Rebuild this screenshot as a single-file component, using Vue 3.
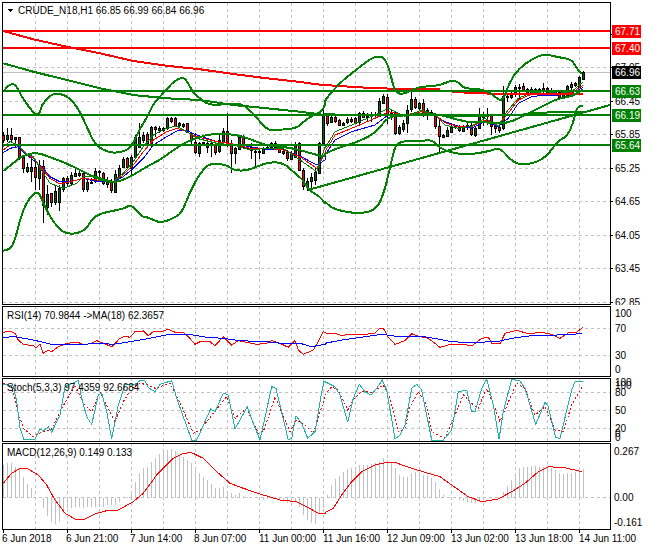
<script setup>
// all series are read off at 3x, so coords get divided by 3 below
const leftPair = (list, oy = 0) => pairs(list, 0, oy);
const rightPair = (list, oy = 0) => pairs(list, 325, oy);

function pairs(list, ox, oy) {
  const out = [];
  for (let i = 0; i < list.length; i += 2) {
    out.push([ox + list[i] / 3, oy + list[i + 1] / 3]);
  }
  return out;
}

function poly(points) {
  return points.map((p) => p[0].toFixed(1) + "," + p[1].toFixed(1)).join(" ");
}

// midpoint smoothing for the fat bollinger curves
function smooth(points) {
  let d = "M" + points[0][0].toFixed(1) + " " + points[0][1].toFixed(1);
  for (let i = 1; i < points.length - 1; i++) {
    const mx = (points[i][0] + points[i + 1][0]) / 2;
    const my = (points[i][1] + points[i + 1][1]) / 2;
    d += " Q" + points[i][0].toFixed(1) + " " + points[i][1].toFixed(1) + " " + mx.toFixed(1) + " " + my.toFixed(1);
  }
  const last = points[points.length - 1];
  return d + " L" + last[0].toFixed(1) + " " + last[1].toFixed(1);
}

const gridX = [35, 67, 99, 131, 163, 195, 227, 259, 291, 323, 355, 387, 419, 451, 483, 515, 547, 579];

const candleRaw = [
  [405,420,395,428,1],[405,418,385,425,0],[405,418,385,425,1],[412,416,410,440,0],[412,470,410,480,1],[470,503,465,518,1],
  [500,512,490,518,0],[500,512,470,545,0],[500,530,480,570,1],[498,535,480,570,0],[498,615,480,668,1],[582,620,555,645,0],
  [580,605,578,620,1],[572,605,555,615,0],[565,605,555,632,0],[535,568,530,575,0],[533,550,528,558,1],[525,548,515,555,0],
  [520,528,508,532,0],[520,524,508,530,0],[518,568,515,575,1],[545,568,540,575,0],[545,548,535,552,0],[512,542,505,550,0],
  [512,516,510,542,1],[518,550,515,555,1],[540,552,532,565,0],[542,570,538,578,1],[522,575,510,578,0],[503,530,495,530,0],
  [477,500,470,505,0],[475,500,470,500,1],[472,505,465,530,0],[412,470,405,475,0],[410,440,368,445,0],[405,420,395,430,0],
  [402,430,395,432,1],[380,430,378,440,0],[381,388,378,410,1],[385,389,378,400,0],[385,390,380,395,1],[355,385,350,390,0],
  [355,362,350,368,1],[353,378,350,382,1],[370,375,365,382,0],[373,378,368,384,0],[370,395,368,400,1],[398,420,395,432,1],
  [425,455,400,462,1],[428,458,425,472,0],[427,430,425,432,1],[430,440,420,458,0],[430,432,425,470,1],[432,455,430,465,1],
  [420,452,405,458,0],[393,425,385,430,0],[393,430,340,440,1],[428,458,420,520,1],[445,460,440,492,0],[410,447,405,450,0],
  [412,440,405,445,1],[435,445,432,448,1],[440,450,430,478,1],[453,456,450,498,0],[453,456,450,478,0],[445,458,440,460,0],
  [440,445,436,450,1],[430,440,425,443,0],[428,440,422,445,0],[437,455,435,460,1],[452,458,440,465,1],[455,473,450,482,1],
  [460,476,452,480,0],[432,470,425,472,0],[430,510,425,512,1],[510,558,505,570,1],[542,558,535,572,0],[530,542,520,565,0],
  [517,540,505,555,0],[430,520,425,522,0],[345,430,315,435,0],
  [345,368,340,378,1],[350,365,338,370,0],[350,362,345,370,1],[360,376,358,378,1],[370,374,365,378,0],[358,365,350,372,0],
  [357,362,352,368,0],[355,368,350,372,1],[340,365,335,378,0],[340,350,332,352,1],[347,352,340,365,0],[345,348,335,365,0],
  [342,346,335,350,0],[303,348,295,352,0],[288,308,282,312,0],[292,345,282,372,1],[338,345,330,360,0],[338,400,335,405,1],
  [380,398,375,405,0],[368,388,360,395,0],[330,370,315,398,0],[298,328,265,335,0],[297,322,290,328,1],[310,325,305,330,0],
  [308,335,298,350,1],[330,345,325,360,0],[337,345,330,348,1],[347,378,340,388,1],[378,408,360,460,1],[405,410,402,412,0],
  [390,408,380,410,0],[380,395,370,398,0],[378,382,375,388,0],[380,390,375,395,1],[380,392,376,395,0],[375,382,365,390,0],
  [375,403,365,408,1],[385,405,380,410,0],[345,385,325,388,0],[345,350,335,378,1],[345,348,325,375,0],[345,378,342,405,1],
  [378,385,370,398,1],[382,390,378,398,1],[288,385,258,390,0],[288,292,280,305,1],[285,290,275,298,0],[260,282,255,290,0],
  [260,264,252,300,0],[258,270,248,275,1],[268,278,265,285,1],[268,280,262,285,0],[268,272,265,278,0],[268,270,265,280,0],
  [263,272,250,280,0],[265,275,262,282,1],[270,278,265,282,0],[275,278,272,282,0],[275,290,272,295,1],[280,290,272,295,0],
  [258,290,255,295,0],[252,262,245,290,0],[250,256,245,262,1],[232,262,228,265,0],[216,238,212,240,0]
];

const candles = candleRaw.map((c, i) => ({
  x: 3 + 4 * i,
  top: Math.round(c[0] / 3),
  bottom: Math.round(c[1] / 3),
  wickTop: Math.round(c[2] / 3),
  wickBottom: Math.round(c[3] / 3),
  fill: c[4] ? "#ff0000" : "#006400"
}));

const bandUpper = smooth([
  ...leftPair([10,275,25,255,45,250,65,290,90,325,105,343,118,343,125,315,150,285,175,280,205,290,235,325,260,380,285,433,310,450,340,460,380,452,400,430,420,385,440,355,460,310,490,280,520,245,545,232,560,240,580,280,600,295,625,315,680,313,725,310,760,340,800,390,830,390,890,385,910,365,940,345,965,335,975,315]),
  ...rightPair([0,300,30,265,60,235,100,205,130,180,160,167,180,175,195,215,210,280,240,282,280,260,340,258,380,240,405,248,415,265,470,268,500,280,530,308,545,270,565,225,600,190,640,168,665,163,700,172,740,178,755,205,770,222])
]);
const bandLower = smooth([
  ...leftPair([10,752,30,750,45,720,65,640,90,590,115,572,130,610,150,650,175,685,200,702,235,700,260,685,285,645,340,632,375,625,393,613,425,650,445,652,480,670,520,655,545,640,570,575,600,520,630,488,680,495,700,510,740,513,800,487,850,487,890,525,910,540,925,570,960,590,975,610]),
  ...rightPair([0,605,25,628,100,642,155,630,180,570,200,480,215,422,280,425,320,418,345,445,380,458,430,465,500,452,525,442,570,495,630,490,670,465,695,425,725,410,745,370,755,320,775,318])
]);
const bandMiddle = smooth([
  ...leftPair([10,513,40,490,60,472,85,462,115,458,150,472,200,490,250,515,300,540,340,548,370,540,400,525,440,500,480,480,520,450,560,425,620,403,680,400,740,412,800,438,850,440,900,450,950,465,975,470]),
  ...rightPair([0,460,50,440,100,425,150,400,190,350,220,348,300,340,350,345,400,360,440,368,470,365,520,372,560,365,600,345,650,320,700,295,740,290,775,268])
]);

const slowGreen = poly([
  ...leftPair([10,190,100,215,200,240,300,265,400,285,500,295,600,300,700,315,800,325,900,335,975,345]),
  ...rightPair([0,343,100,345,350,345,400,348,580,345,640,338,775,335])
]);
const slowRedA = poly([
  ...leftPair([10,93,100,118,200,140,300,160,400,183,500,197,600,208,700,222,800,235,900,246,975,256]),
  ...rightPair([0,255,100,262,200,266,345,268])
]);
const slowRedB = poly(rightPair([380,276,500,281,600,283,775,283]));

const maBlue = poly([
  ...leftPair([10,458,30,445,55,440,75,460,100,480,130,505,150,530,180,545,210,545,250,535,290,545,340,545,370,530,400,505,430,475,460,435,500,410,530,393,560,392,590,405,650,425,700,432,750,440,800,448,850,450,900,468,950,495,975,480]),
  ...rightPair([0,465,30,420,80,395,150,375,190,345,230,345,270,345,320,340,360,365,400,378,440,385,480,365,520,380,550,355,580,310,620,290,660,285,700,285,740,280,775,262])
]);
const maRed = poly([
  ...leftPair([10,450,30,435,55,435,75,458,100,475,130,510,150,535,180,552,210,545,250,535,290,540,340,545,370,525,400,495,430,455,460,420,500,395,530,385,560,395,590,410,650,425,700,432,750,445,800,445,850,450,900,470,950,505,975,460]),
  ...rightPair([0,455,30,405,80,385,150,355,190,335,240,345,290,335,330,345,360,368,400,380,440,380,480,360,520,378,545,345,580,300,620,282,660,280,700,282,740,278,775,255])
]);
const maGreen = poly([
  ...leftPair([10,440,30,425,55,435,75,460,100,470,130,520,150,550,190,565,230,550,250,530,290,530,340,545,370,520,400,485,430,440,460,405,500,385,530,378,560,395,590,415,650,430,700,435,750,450,800,445,850,445,900,480,950,515,975,440]),
  ...rightPair([0,445,30,395,80,375,150,345,190,325,240,350,290,330,330,345,360,375,400,385,440,378,480,355,520,378,545,335,580,295,620,278,660,275,700,280,740,275,775,245])
]);

const priceLabels = [
  { text: "67.65", y: 34 }, { text: "67.05", y: 67 }, { text: "66.45", y: 101 }, { text: "65.85", y: 134 },
  { text: "65.25", y: 168 }, { text: "64.65", y: 201 }, { text: "64.05", y: 235 }, { text: "63.45", y: 268 }, { text: "62.85", y: 302 }
];
const priceFlags = [
  { text: "67.71", y: 31, bg: "#ff0000" }, { text: "67.40", y: 48, bg: "#ff0000" }, { text: "66.96", y: 72, bg: "#000000" },
  { text: "66.63", y: 91, bg: "#008000" }, { text: "66.19", y: 115, bg: "#008000" }, { text: "65.64", y: 145, bg: "#008000" }
];

const rsiLine = poly([
  ...leftPair([10,172,30,168,45,175,55,195,70,208,100,212,108,218,120,208,130,235,145,225,155,230,175,215,200,205,235,202,250,210,275,205,290,197,310,205,335,215,360,190,375,184,390,187,405,170,430,168,445,182,460,170,490,168,505,162,525,172,550,173,565,185,585,208,600,200,630,200,645,212,670,185,695,210,715,197,740,202,770,208,800,205,815,197,840,205,865,217,885,197,895,225,910,238,940,225,955,200,970,170], 275),
  ...rightPair([0,172,10,177,30,175,50,182,70,178,100,178,130,177,150,175,165,160,175,160,190,187,210,208,240,197,260,176,280,184,310,190,345,217,380,207,410,207,440,213,470,190,490,187,500,205,525,207,540,175,575,166,610,176,650,172,680,178,705,190,730,174,755,172,775,156], 275)
]);
const rsiAvg = poly([
  ...leftPair([10,187,45,185,100,195,150,207,200,207,250,208,300,205,340,208,390,200,450,190,510,178,580,180,620,187,670,190,720,197,800,200,860,207,900,205,935,215,975,208], 275),
  ...rightPair([0,205,50,195,100,188,170,178,230,186,290,184,340,192,380,200,440,203,520,199,570,188,620,182,680,181,770,176], 275)
]);

const stochMain = poly([
  ...leftPair([10,328,40,333,50,380,60,460,72,495,105,492,120,462,130,468,145,455,155,472,180,420,195,335,235,316,245,370,260,425,275,448,295,360,305,355,320,410,335,492,355,390,375,330,405,328,420,317,435,318,445,338,465,350,480,328,515,317,530,370,575,495,590,495,632,402,645,410,670,354,685,360,705,462,742,395,760,445,780,495,815,335,828,340,865,495,875,490,888,422,905,445,923,490,945,470,960,380,972,318], 275),
  ...rightPair([0,320,30,335,45,360,68,442,85,370,103,328,120,350,138,360,155,340,172,315,185,345,210,492,225,480,240,450,260,340,275,328,290,345,320,495,355,495,380,465,400,350,425,345,440,410,450,410,470,340,485,313,505,390,522,492,535,410,560,313,585,318,600,340,632,448,660,382,670,395,692,488,705,490,740,345,750,320,775,320], 275)
]);
const stochSignal = poly([
  ...leftPair([10,325,35,335,50,400,70,460,100,485,125,472,155,462,185,400,200,375,225,330,250,385,275,410,300,350,325,400,345,440,370,380,395,340,420,325,445,330,465,340,510,325,545,395,580,475,600,465,640,415,680,365,705,430,740,400,775,475,790,470,825,365,870,470,890,435,915,450,940,475,975,365], 275),
  ...rightPair([0,360,20,335,40,345,68,405,85,375,110,348,140,352,175,330,195,370,220,470,240,460,255,395,280,350,305,390,320,470,340,480,360,490,390,420,415,360,440,385,460,400,485,340,510,400,525,440,555,370,575,325,600,340,630,420,660,395,690,465,715,470,740,390,775,330], 275)
]);

const macdTops = [
  570,565,565,575,580,605,628,640,665,667,698,722,742,748,740,715,700,700,695,695,700,695,695,695,695,695,690,690,690,682,670,667,
  650,620,595,578,575,562,550,538,530,525,522,528,540,545,555,565,580,595,605,615,628,640,640,635,652,655,660,655,662,665,665,665,
  668,675,672,670,670,672,675,685,680,680,695,720,735,745,748,715,700,
  660,630,612,603,590,582,580,578,570,570,570,568,565,560,548,555,565,580,600,605,605,595,592,592,600,600,610,622,642,660,667,667,
  670,675,678,680,685,685,680,670,670,670,667,665,650,632,615,595,580,575,575,573,573,575,575,572,578,585,595,598,595,593,592,590,582
];
const macdBars = macdTops.map((z, i) => ({ x: 3.5 + 4 * i, y: 275 + z / 3 }));
const macdLine = poly([
  ...leftPair([10,625,35,595,60,580,85,582,115,600,140,630,165,675,195,715,225,732,255,732,290,715,320,707,355,705,400,680,430,655,470,600,520,550,550,535,575,533,610,550,650,590,690,625,730,640,790,660,840,675,890,680,920,695,955,715,975,716], 275),
  ...rightPair([0,713,25,700,50,660,80,620,110,590,150,570,185,562,215,564,260,580,300,592,345,605,380,630,430,665,470,680,520,672,560,650,600,625,640,590,670,575,720,578,770,590], 275)
]);

const timeLabels = [
  { text: "6 Jun 2018", x: 2, tick: 3 }, { text: "6 Jun 21:00", x: 66, tick: 67 }, { text: "7 Jun 14:00", x: 130, tick: 131 },
  { text: "8 Jun 07:00", x: 194, tick: 195 }, { text: "11 Jun 00:00", x: 259, tick: 259 }, { text: "11 Jun 16:00", x: 323, tick: 323 },
  { text: "12 Jun 09:00", x: 387, tick: 387 }, { text: "13 Jun 02:00", x: 451, tick: 451 }, { text: "13 Jun 18:00", x: 515, tick: 515 },
  { text: "14 Jun 11:00", x: 579, tick: 579 }
];
</script>

<template>
  <div class="chart">
    <!-- price pane -->
    <svg class="pane" width="650" height="305" viewBox="0 0 650 305">
      <g class="grid">
        <line v-for="x in gridX" :key="x" :x1="x + 0.5" y1="3" :x2="x + 0.5" y2="304" />
        <line v-for="p in priceLabels.slice(1)" :key="p.text" x1="3" :y1="p.y + 0.5" x2="610" :y2="p.y + 0.5" />
      </g>
      <line class="last-price" x1="3" y1="72.5" x2="610" y2="72.5" />
      <g v-for="c in candles" :key="c.x">
        <line class="wick" :x1="c.x + 0.5" :y1="c.wickTop" :x2="c.x + 0.5" :y2="c.wickBottom" />
        <rect class="body" :x="c.x - 0.5" :y="c.top + 0.5" width="2" :height="Math.max(c.bottom - c.top, 1)" :fill="c.fill" />
      </g>
      <polyline class="ma" stroke="#0000ff" :points="maBlue" />
      <polyline class="ma" stroke="#ff0000" :points="maRed" />
      <polyline class="ma" stroke="#008000" :points="maGreen" />
      <polyline class="slow" stroke="#ff0000" :points="slowRedA" />
      <polyline class="slow" stroke="#ff0000" :points="slowRedB" />
      <polyline class="slow" stroke="#008000" :points="slowGreen" />
      <path class="band" :d="bandUpper" />
      <path class="band" :d="bandMiddle" />
      <path class="band" :d="bandLower" />
      <line class="level" stroke="#008000" x1="308" y1="190" x2="610" y2="105" />
      <line class="level" stroke="#ff0000" x1="3" y1="31" x2="610" y2="31" />
      <line class="level" stroke="#ff0000" x1="3" y1="48" x2="610" y2="48" />
      <line class="level" stroke="#008000" x1="3" y1="91" x2="610" y2="91" />
      <line class="level" stroke="#008000" x1="3" y1="115" x2="610" y2="115" />
      <line class="level" stroke="#008000" x1="3" y1="145" x2="610" y2="145" />
      <rect class="frame" x="2.5" y="2.5" width="608" height="302" />
      <polygon points="7,9 13,9 10,12" fill="#000" />
      <text class="txt" x="18" y="14">CRUDE_N18,H1  66.85 66.99 66.84 66.96</text>
      <g v-for="p in priceLabels" :key="p.text">
        <line class="tick" x1="610" :y1="p.y + 0.5" x2="613" :y2="p.y + 0.5" />
        <text class="txt" x="615" :y="p.y + 4">{{ p.text }}</text>
      </g>
      <g v-for="f in priceFlags" :key="f.text">
        <rect x="612" :y="f.y - 6" width="29" height="13" :fill="f.bg" />
        <text class="txt flag" x="615" :y="f.y + 4">{{ f.text }}</text>
      </g>
    </svg>

    <!-- RSI -->
    <svg class="pane gap" width="650" height="71" viewBox="0 306 650 71">
      <g class="grid">
        <line v-for="x in gridX" :key="x" :x1="x + 0.5" y1="306" :x2="x + 0.5" y2="376" />
        <line x1="3" y1="328.5" x2="610" y2="328.5" />
        <line x1="3" y1="355.5" x2="610" y2="355.5" />
      </g>
      <polyline class="ma" stroke="#ff0000" :points="rsiLine" />
      <polyline class="ma" stroke="#0000ff" :points="rsiAvg" />
      <rect class="frame" x="2.5" y="306.5" width="608" height="70" />
      <text class="txt" x="7" y="319">RSI(14) 70.9844  -&gt;MA(18) 62.3657</text>
      <text class="txt" x="615" y="317">100</text>
      <text class="txt" x="615" y="332">70</text>
      <text class="txt" x="615" y="359">30</text>
      <text class="txt" x="615" y="373">0</text>
    </svg>

    <!-- Stochastic -->
    <svg class="pane gap" width="650" height="64" viewBox="0 378 650 64">
      <g class="grid">
        <line v-for="x in gridX" :key="x" :x1="x + 0.5" y1="378" :x2="x + 0.5" y2="441" />
        <line x1="3" y1="392.5" x2="610" y2="392.5" />
        <line x1="3" y1="410.5" x2="610" y2="410.5" />
        <line x1="3" y1="428.5" x2="610" y2="428.5" />
      </g>
      <polyline class="ma dashed" stroke="#ff0000" :points="stochSignal" />
      <polyline class="ma" stroke="#20b2aa" :points="stochMain" />
      <rect class="frame" x="2.5" y="378.5" width="608" height="63" />
      <text class="txt" x="7" y="391">Stoch(5,3,3) 97.4359 92.6684</text>
      <text class="txt" x="615" y="386">100</text>
      <text class="txt" x="615" y="389">100</text>
      <text class="txt" x="615" y="396">80</text>
      <text class="txt" x="615" y="414">50</text>
      <text class="txt" x="615" y="432">20</text>
      <text class="txt" x="615" y="437">0</text>
      <text class="txt" x="615" y="441">0</text>
    </svg>

    <!-- MACD -->
    <svg class="pane gap" width="650" height="87" viewBox="0 443 650 87">
      <g class="grid">
        <line v-for="x in gridX" :key="x" :x1="x + 0.5" y1="443" :x2="x + 0.5" y2="529" />
        <line x1="3" y1="497.5" x2="610" y2="497.5" />
      </g>
      <line v-for="b in macdBars" :key="b.x" class="hist" :x1="b.x" y1="497.5" :x2="b.x" :y2="b.y" />
      <polyline class="ma" stroke="#ff0000" :points="macdLine" />
      <rect class="frame" x="2.5" y="443.5" width="608" height="86" />
      <text class="txt" x="7" y="456">MACD(12,26,9) 0.149 0.133</text>
      <text class="txt" x="614" y="455">0.267</text>
      <text class="txt" x="614" y="501">0.00</text>
      <text class="txt" x="614" y="526">-0.161</text>
    </svg>

    <!-- time axis -->
    <svg class="pane" width="650" height="20" viewBox="0 530 650 20">
      <g v-for="t in timeLabels" :key="t.text">
        <line class="tick" :x1="t.tick + 0.5" y1="530" :x2="t.tick + 0.5" y2="533" />
        <text class="txt" :x="t.x" y="542">{{ t.text }}</text>
      </g>
    </svg>
  </div>
</template>

<style scoped>
.chart {
  width: 650px;
  height: 550px;
  background: #fff;
  overflow: hidden;
  display: flex;
  flex-direction: column;
}

.pane {
  display: block;
  flex: none;
  shape-rendering: crispEdges;
}

.gap {
  margin-top: 1px;
}

.grid line {
  stroke: #c0c0c0;
  stroke-width: 1;
  stroke-dasharray: 3 3;
}

.last-price {
  stroke: #c0c0c0;
  stroke-width: 1;
}

.wick {
  stroke: #000;
  stroke-width: 1;
}

.body {
  stroke: #000;
  stroke-width: 1;
}

.ma {
  fill: none;
  stroke-width: 1;
}

.dashed {
  stroke-dasharray: 2 2;
}

.slow {
  fill: none;
  stroke-width: 2;
}

.band {
  fill: none;
  stroke: #008000;
  stroke-width: 2;
}

.level {
  stroke-width: 2;
}

.hist {
  stroke: #c0c0c0;
  stroke-width: 1;
}

.frame {
  fill: none;
  stroke: #000;
  stroke-width: 1;
}

.tick {
  stroke: #000;
  stroke-width: 1;
}

.txt {
  font-family: "Liberation Sans", Arial, sans-serif;
  font-size: 10px;
  fill: #000;
  white-space: pre;
  shape-rendering: auto;
}

.flag {
  fill: #fff;
}
</style>
